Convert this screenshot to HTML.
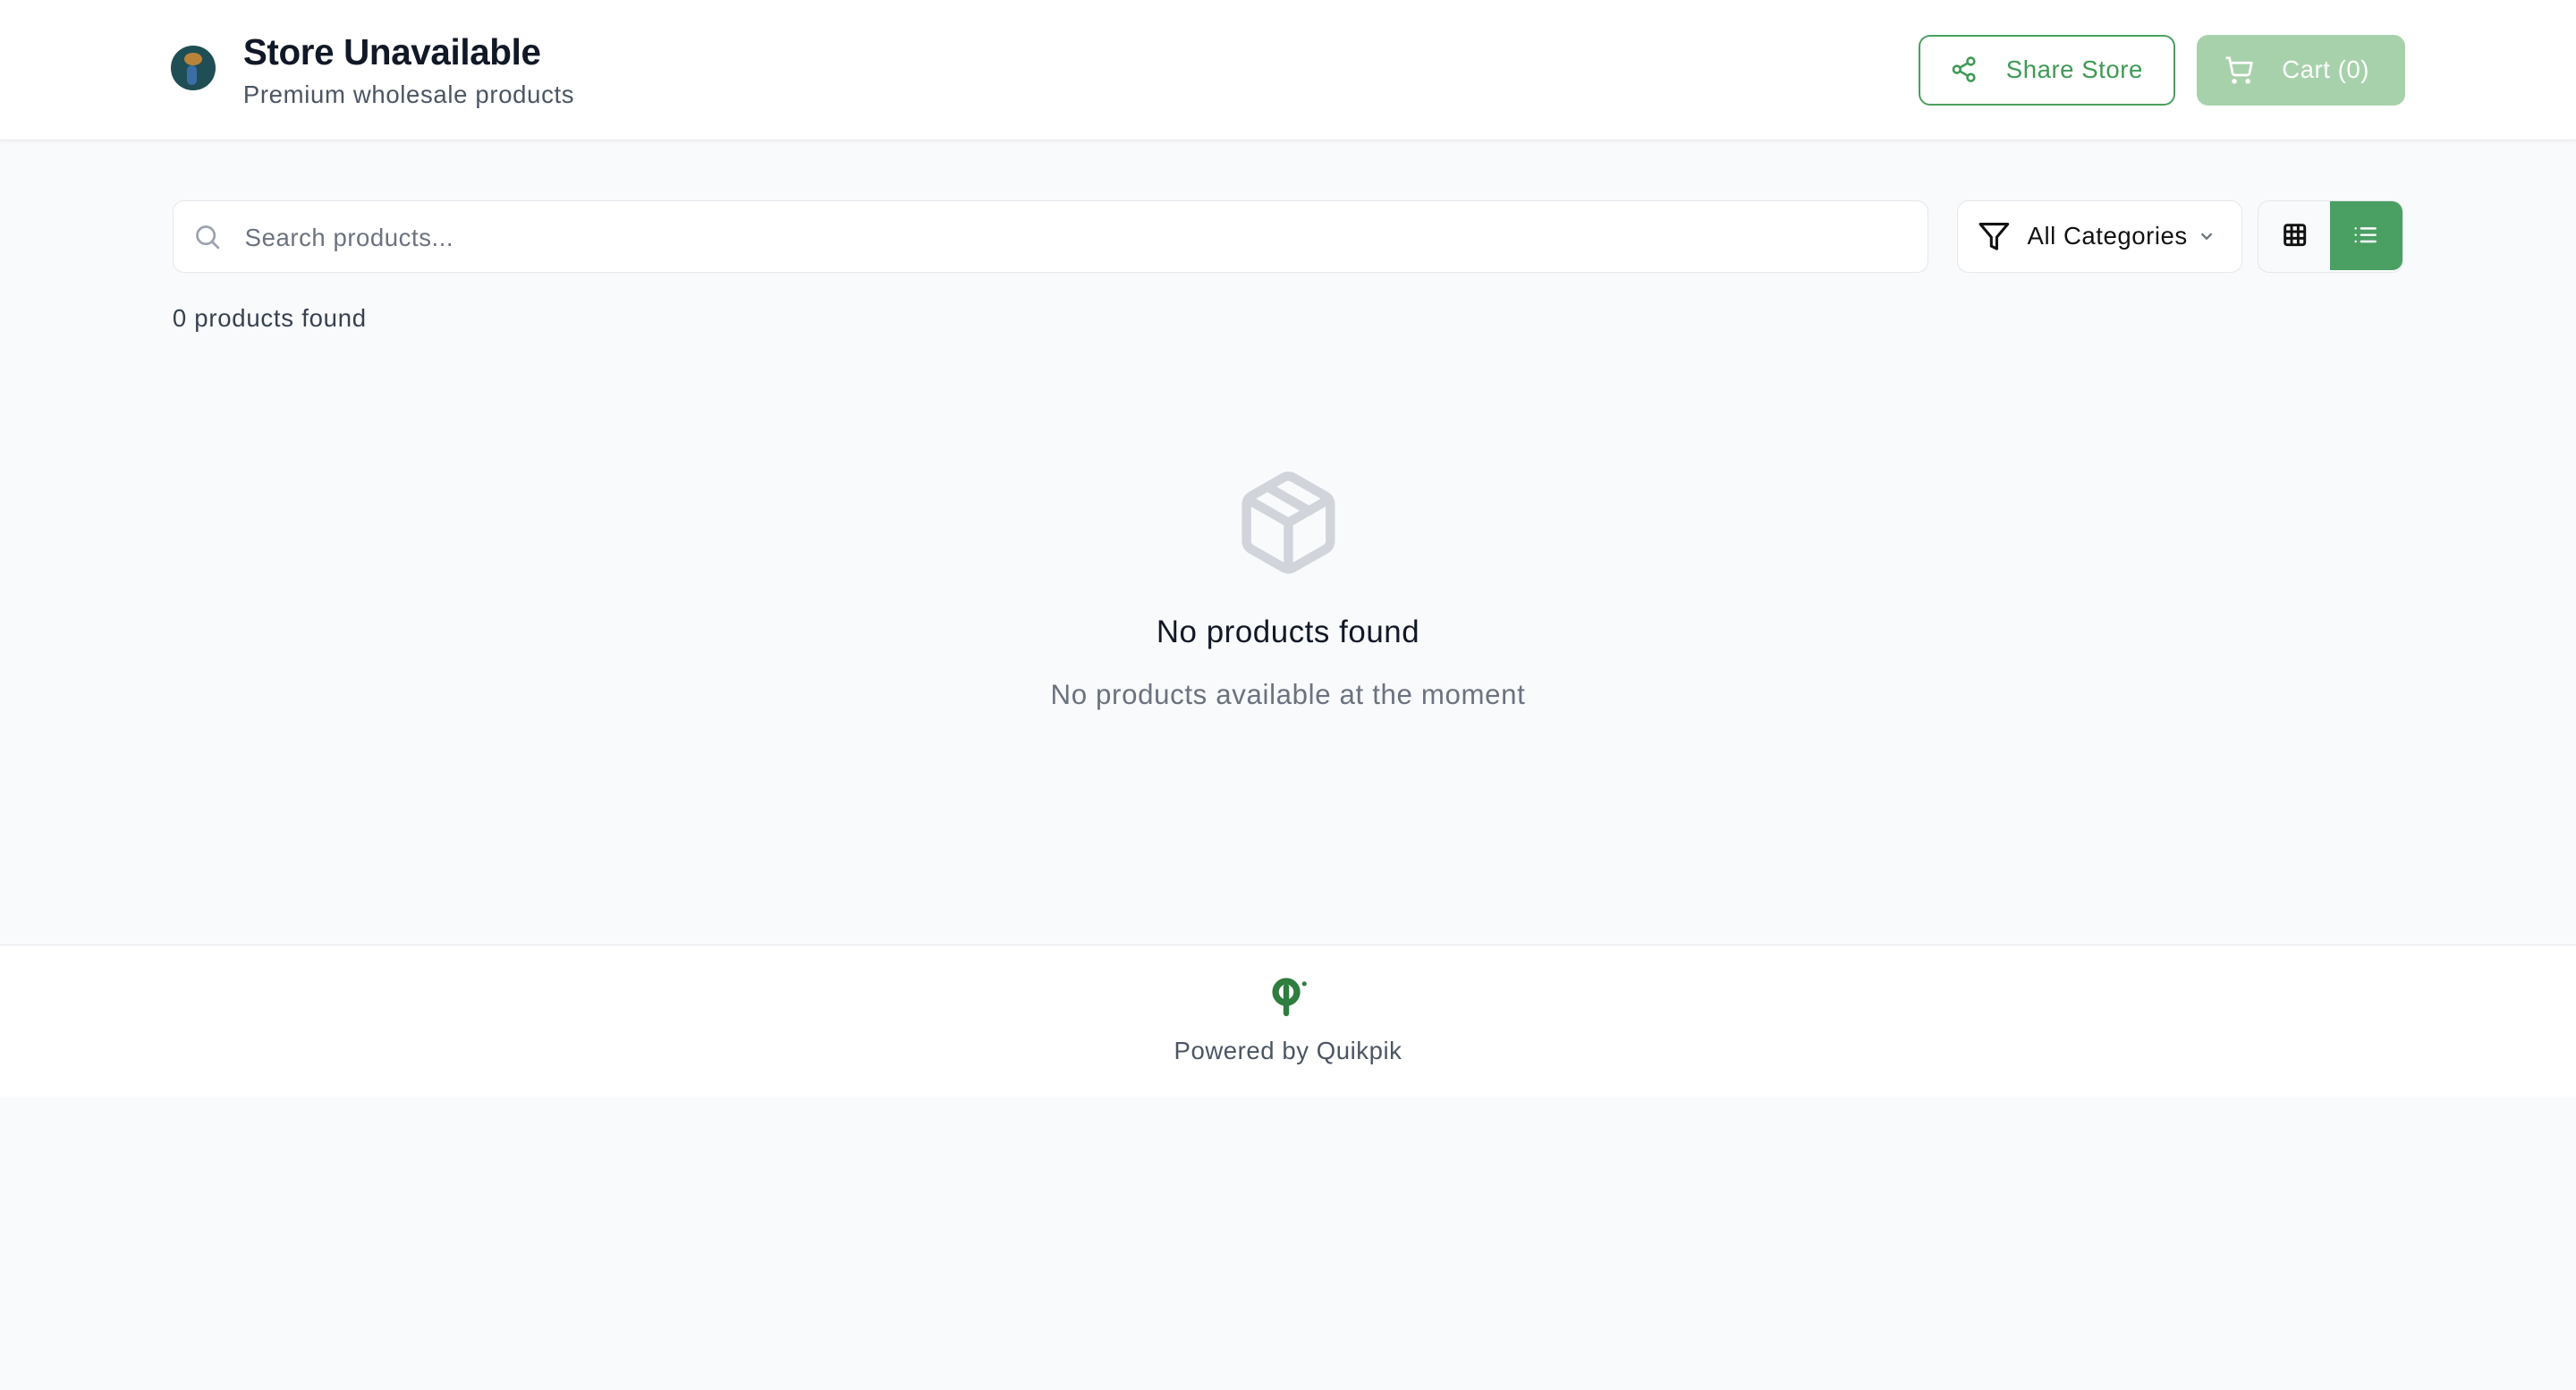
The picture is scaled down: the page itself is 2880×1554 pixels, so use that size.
<!DOCTYPE html>
<html><head><meta charset="utf-8"><style>
html,body{margin:0;padding:0}
body{width:1568px;height:846px;zoom:1.836735;background:#f9fafb;font-family:"Liberation Sans",Arial,sans-serif;position:relative;overflow:hidden}
.abs{position:absolute}
.hdr{left:0;top:0;width:1568px;height:85px;background:#fff;border-bottom:1px solid #e5e7eb;box-shadow:0 1px 2px rgba(0,0,0,.05)}
.btn{box-sizing:border-box;border-radius:7px;display:flex;align-items:center;font-size:15px;letter-spacing:0.3px}
.box{box-sizing:border-box;background:#fff;border:1px solid #e5e7eb;border-radius:7px}
</style></head><body>
<div class="abs hdr"></div>
<div class="abs" style="left:104px;top:28px;width:27px;height:27px;border-radius:50%;background:#1f4f55;overflow:hidden">
  <div class="abs" style="left:8px;top:4px;width:11px;height:8px;border-radius:50%;background:#b9843a"></div>
  <div class="abs" style="left:10px;top:12px;width:6px;height:12px;background:#3b6ea5;border-radius:3px"></div>
</div>
<div class="abs" style="left:148px;top:19px;font-size:22px;font-weight:bold;color:#111827;letter-spacing:-0.2px">Store Unavailable</div>
<div class="abs" style="left:148px;top:49px;font-size:15px;color:#4b5563;letter-spacing:0.35px">Premium wholesale products</div>

<div class="abs btn" style="left:1168px;top:21px;width:156px;height:43px;border:1.5px solid #4a9f5e;color:#3f9a55;background:#fff">
  <svg style="margin-left:18px" width="17" height="17" viewBox="0 0 24 24" fill="none" stroke="#3f9a55" stroke-width="2" stroke-linecap="round"><circle cx="18" cy="5" r="3"/><circle cx="6" cy="12" r="3"/><circle cx="18" cy="19" r="3"/><path d="M8.6 13.5l6.8 4M15.4 6.5l-6.8 4"/></svg>
  <span style="margin-left:17px">Share Store</span></div>
<div class="abs btn" style="left:1337px;top:21px;width:127px;height:43px;background:#a7d1ab;color:#fff">
  <svg style="margin-left:17px" width="18" height="18" viewBox="0 0 24 24" fill="none" stroke="#fff" stroke-width="2" stroke-linecap="round" stroke-linejoin="round"><circle cx="8" cy="21" r="1"/><circle cx="19" cy="21" r="1"/><path d="M2 2h2l2.6 12.4a2 2 0 0 0 2 1.6h9.7a2 2 0 0 0 2-1.6L22 6H5.1"/></svg>
  <span style="margin-left:17px">Cart (0)</span></div>

<div class="abs box" style="left:105px;top:122px;width:1069px;height:44px"></div>
<svg class="abs" style="left:117px;top:135px" width="18" height="18" viewBox="0 0 24 24" fill="none" stroke="#9ca3af" stroke-width="2" stroke-linecap="round"><circle cx="11" cy="11" r="7"/><path d="M21 21l-4.3-4.3"/></svg>
<div class="abs" style="left:149px;top:136px;font-size:15px;color:#6b7280;letter-spacing:0.3px">Search products...</div>

<div class="abs box" style="left:1191px;top:122px;width:174px;height:44px"></div>
<svg class="abs" style="left:1204px;top:134px" width="20" height="20" viewBox="0 0 24 24" fill="none" stroke="#111" stroke-width="2" stroke-linejoin="round"><path d="M22 3H2l8 9.5V19l4 2v-8.5z"/></svg>
<div class="abs" style="left:1234px;top:135px;font-size:15px;color:#111;letter-spacing:0.3px">All Categories</div>
<svg class="abs" style="left:1337px;top:138px" width="12" height="12" viewBox="0 0 24 24" fill="none" stroke="#6b7280" stroke-width="2.5"><path d="M6 9l6 6 6-6"/></svg>

<div class="abs box" style="left:1374px;top:122px;width:89px;height:44px;overflow:hidden;background:#f9fafb">
  <div class="abs" style="left:44px;top:0;width:44px;height:42px;background:#4aa063;border-radius:0 6px 6px 0"></div>
</div>
<svg class="abs" style="left:1389px;top:135px" width="16" height="16" viewBox="0 0 24 24" fill="none" stroke="#111" stroke-width="2.4"><rect x="3" y="3" width="18" height="18" rx="2"/><path d="M3 9h18M3 15h18M9 3v18M15 3v18"/></svg>
<svg class="abs" style="left:1432px;top:135px" width="16" height="16" viewBox="0 0 24 24" fill="none" stroke="#fff" stroke-width="2" stroke-linecap="round"><path d="M8 6h13M8 12h13M8 18h13M3 6h.01M3 12h.01M3 18h.01"/></svg>

<div class="abs" style="left:105px;top:185px;font-size:15px;color:#374151;letter-spacing:0.4px">0 products found</div>

<svg class="abs" style="left:750px;top:283px" width="68" height="70" viewBox="0 0 24 24" fill="none" stroke="#d1d5db" stroke-width="2" stroke-linecap="round" stroke-linejoin="round"><path d="M21 8a2 2 0 0 0-1-1.7l-7-4a2 2 0 0 0-2 0l-7 4A2 2 0 0 0 3 8v8a2 2 0 0 0 1 1.7l7 4a2 2 0 0 0 2 0l7-4A2 2 0 0 0 21 16Z"/><path d="M3.3 7L12 12l8.7-5M12 22V12M7.5 4.3l9 5.2"/></svg>
<div class="abs" style="left:0;width:1568px;top:374px;text-align:center;font-size:19px;color:#111827;letter-spacing:0.3px">No products found</div>
<div class="abs" style="left:0;width:1568px;top:413px;text-align:center;font-size:17px;color:#6b7280;letter-spacing:0.35px">No products available at the moment</div>

<div class="abs" style="left:0;top:575px;width:1568px;height:92px;background:#fff;border-top:1px solid #e5e7eb"></div>
<svg class="abs" style="left:771px;top:592px" width="28" height="28" viewBox="0 0 28 28"><circle cx="12" cy="12" r="6.5" fill="none" stroke="#2f7d3f" stroke-width="4"/><path d="M12 9v16" stroke="#2f7d3f" stroke-width="3.5" stroke-linecap="round"/><circle cx="23" cy="7" r="1.4" fill="#2f7d3f"/></svg>
<div class="abs" style="left:0;width:1568px;top:631px;text-align:center;font-size:15px;color:#4b5563;letter-spacing:0.3px">Powered by Quikpik</div>
</body></html>
